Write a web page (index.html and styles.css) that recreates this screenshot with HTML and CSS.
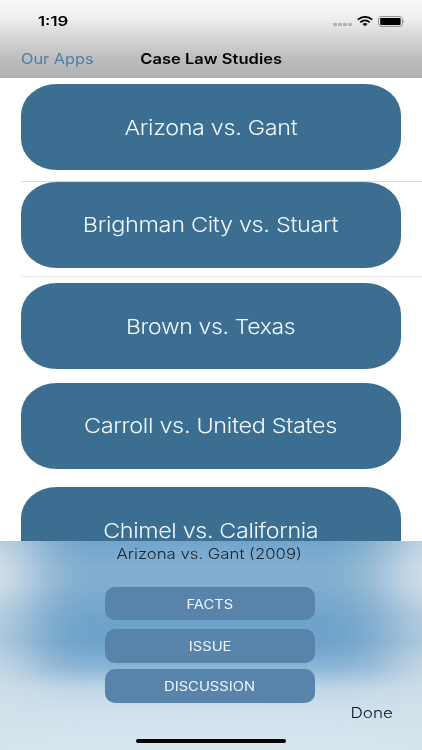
FILE: index.html
```
<!DOCTYPE html>
<html lang="en">
<head>
<meta charset="utf-8">
<title>Case Law Studies</title>
<link rel="stylesheet" href="styles.css">
</head>
<body>
<div class="screen">
  <header class="top">
    <div class="status">
      <span class="time">1:19</span>
      <div class="indicators">
        <svg class="dots" width="19" height="3" viewBox="0 0 19 3" fill="#b1b1b1"><rect width="4" height="3" rx=".8"/><rect x="5" width="4" height="3" rx=".8"/><rect x="10" width="4" height="3" rx=".8"/><rect x="15" width="4" height="3" rx=".8"/></svg>
        <svg class="wifi" width="16" height="11" viewBox="0 0 16 11" fill="none" stroke="#080808" stroke-width="1.8"><path d="M.7 3.6Q8-1.8 15.3 3.6"/><path d="M3.3 6.2Q8 2.6 12.7 6.2"/><path d="M5.4 7.9Q8 6.1 10.6 7.9L8 10.3Z" fill="#080808" stroke="none"/></svg>
        <svg class="battery" width="27" height="11" viewBox="0 0 27 11"><rect x=".6" y=".6" width="23.8" height="9.8" rx="2.7" fill="none" stroke="#8c8c8c"/><rect x="2.2" y="2" width="20.4" height="7" rx="1.2"/><path d="M25.4 3.8Q27 5.3 25.4 7Z" fill="#888"/></svg>
      </div>
    </div>
    <nav class="nav">
      <a class="back">Our Apps</a>
      <h1 class="title">Case Law Studies</h1>
    </nav>
  </header>
  <main class="list">
    <div class="row row-1"><button class="case"><span class="t1">Arizona vs. Gant</span></button></div>
    <div class="row row-2"><button class="case"><span class="t2">Brighman City vs. Stuart</span></button></div>
    <div class="row row-3"><button class="case"><span class="t3">Brown vs. Texas</span></button></div>
    <div class="row row-4"><button class="case"><span class="t4">Carroll vs. United States</span></button></div>
    <div class="row row-5"><button class="case"><span class="t5">Chimel vs. California</span></button></div>
  </main>
  <section class="sheet">
    <h2 class="sheet-title"><span>Arizona vs. Gant (2009)</span></h2>
    <button class="action facts"><span>FACTS</span></button>
    <button class="action issue"><span>ISSUE</span></button>
    <button class="action discussion"><span>DISCUSSION</span></button>
    <a class="done">Done</a>
    <div class="home"></div>
  </section>
</div>
</body>
</html>
```
FILE: styles.css
```
* { box-sizing: border-box; }
body { margin: 0; background: #fff; font-family: Inter, "Liberation Sans", sans-serif; }
button { border: 0; padding: 0; font: inherit; color: inherit; }
span, a, .title { display: inline-block; white-space: nowrap; }
.screen { width: 422px; height: 750px; overflow: hidden; display: flex; flex-direction: column; }
.top { height: 77.5px; flex: none; background: linear-gradient(#f8f8f8 0, #efefef 18px, #d5d5d5 38px, #bcbcbc 60px, #b2b2b2 100%); }
.status { height: 40px; padding: 2px 17px 0 38px; display: flex; align-items: center; justify-content: space-between; }
.time { font-size: 13.5px; font-weight: 600; line-height: 18px; transform: scaleX(1.24); transform-origin: left; }
.indicators { display: flex; align-items: center; }
.dots { margin-top: 6px; }
.wifi { margin-left: 5px; }
.battery { margin-left: 5px; }
.nav { height: 37px; padding: 0 21px; display: grid; grid-template-columns: 1fr auto 1fr; align-items: center; }
.back { justify-self: start; font-size: 14.5px; color: #4b80aa; transform: scaleX(1.125); transform-origin: left; }
.title { margin: 0; font-size: 14.5px; font-weight: 600; transform: scaleX(1.14); }
.list { height: 463px; flex: none; overflow: hidden; }
.row { padding-left: 21px; padding-right: 21px; }
.row-1 { height: 103.5px; padding-top: 6.5px; }
.row-2 { height: 94.5px; padding-top: .5px; background: linear-gradient(#d9dcdf, #d9dcdf) 21px 0 / 100% 1px no-repeat; }
.row-3 { height: 106.5px; padding-top: 7.5px; background: linear-gradient(#e6e6e6, #e6e6e6) 21px 0 / 100% 1px no-repeat; }
.row-4 { height: 105px; padding-top: .5px; }
.row-5 { height: 90px; }
.case { display: flex; align-items: center; justify-content: center; width: 380px; height: 86px; border-radius: 36px / 31px; background: #3b6e91; color: #f1f9ff; font-size: 20.5px; font-weight: 350; letter-spacing: -.3px; }
.case .t1 { transform: scaleX(1.14); }
.case .t2 { transform: scaleX(1.145); }
.case .t3 { transform: scaleX(1.12); }
.case .t4 { transform: scaleX(1.145); }
.case .t5 { transform: scaleX(1.135); }
.sheet { position: relative; flex: 1; display: flex; flex-direction: column; align-items: center; background: linear-gradient(#72a5cc 0, #82aed0 25px, #82aed0 42px, #6fa3cb 80px, #6fa3cb 103px, #8bb4d5 126px, #c0d7e8 148px, #d0e1ed 170px, #d7e7ef 100%); }
.sheet::before { content: ""; position: absolute; inset: 0; background: linear-gradient(90deg, #d4e0e8 0, #d4e0e8d0 16px, #d4e0e890 32px, #d4e0e848 50px, #d4e0e818 68px, #d4e0e800 90px, #d4e0e800 326px, #d4e0e818 348px, #d4e0e848 370px, #d4e0e890 390px, #d4e0e8d0 406px, #d4e0e8 100%); mask-image: linear-gradient(#000b 0, #000e 25px, #000e 42px, #000a 72px, #0009 100px, #000b 125px, #000a 155px, #0006 100%); }
.sheet > * { position: relative; }
.sheet-title { margin: 4px 3px 0 0; height: 18px; line-height: 18px; font-size: 14.5px; font-weight: 350; color: #18242e; }
.sheet-title span { transform: scaleX(1.155); }
.action { display: flex; align-items: center; justify-content: center; flex: none; width: 210px; margin-right: 2px; border-radius: 10px; background: #5883aa; color: #edf7ff; font-size: 12.5px; }
.action span { transform: scaleX(1.18); }
.facts { height: 33px; margin-top: 24.5px; padding-top: 1px; }
.issue { height: 34px; margin-top: 9px; }
.discussion { height: 34px; margin-top: 6px; }
.done { align-self: flex-end; margin: 0 29px 0 0; height: 20px; line-height: 20px; font-size: 14.5px; font-weight: 350; color: #101820; transform: scaleX(1.18); transform-origin: right; }
.home { width: 150px; height: 4px; margin-top: 16px; border-radius: 2px; background: #000; }
```
